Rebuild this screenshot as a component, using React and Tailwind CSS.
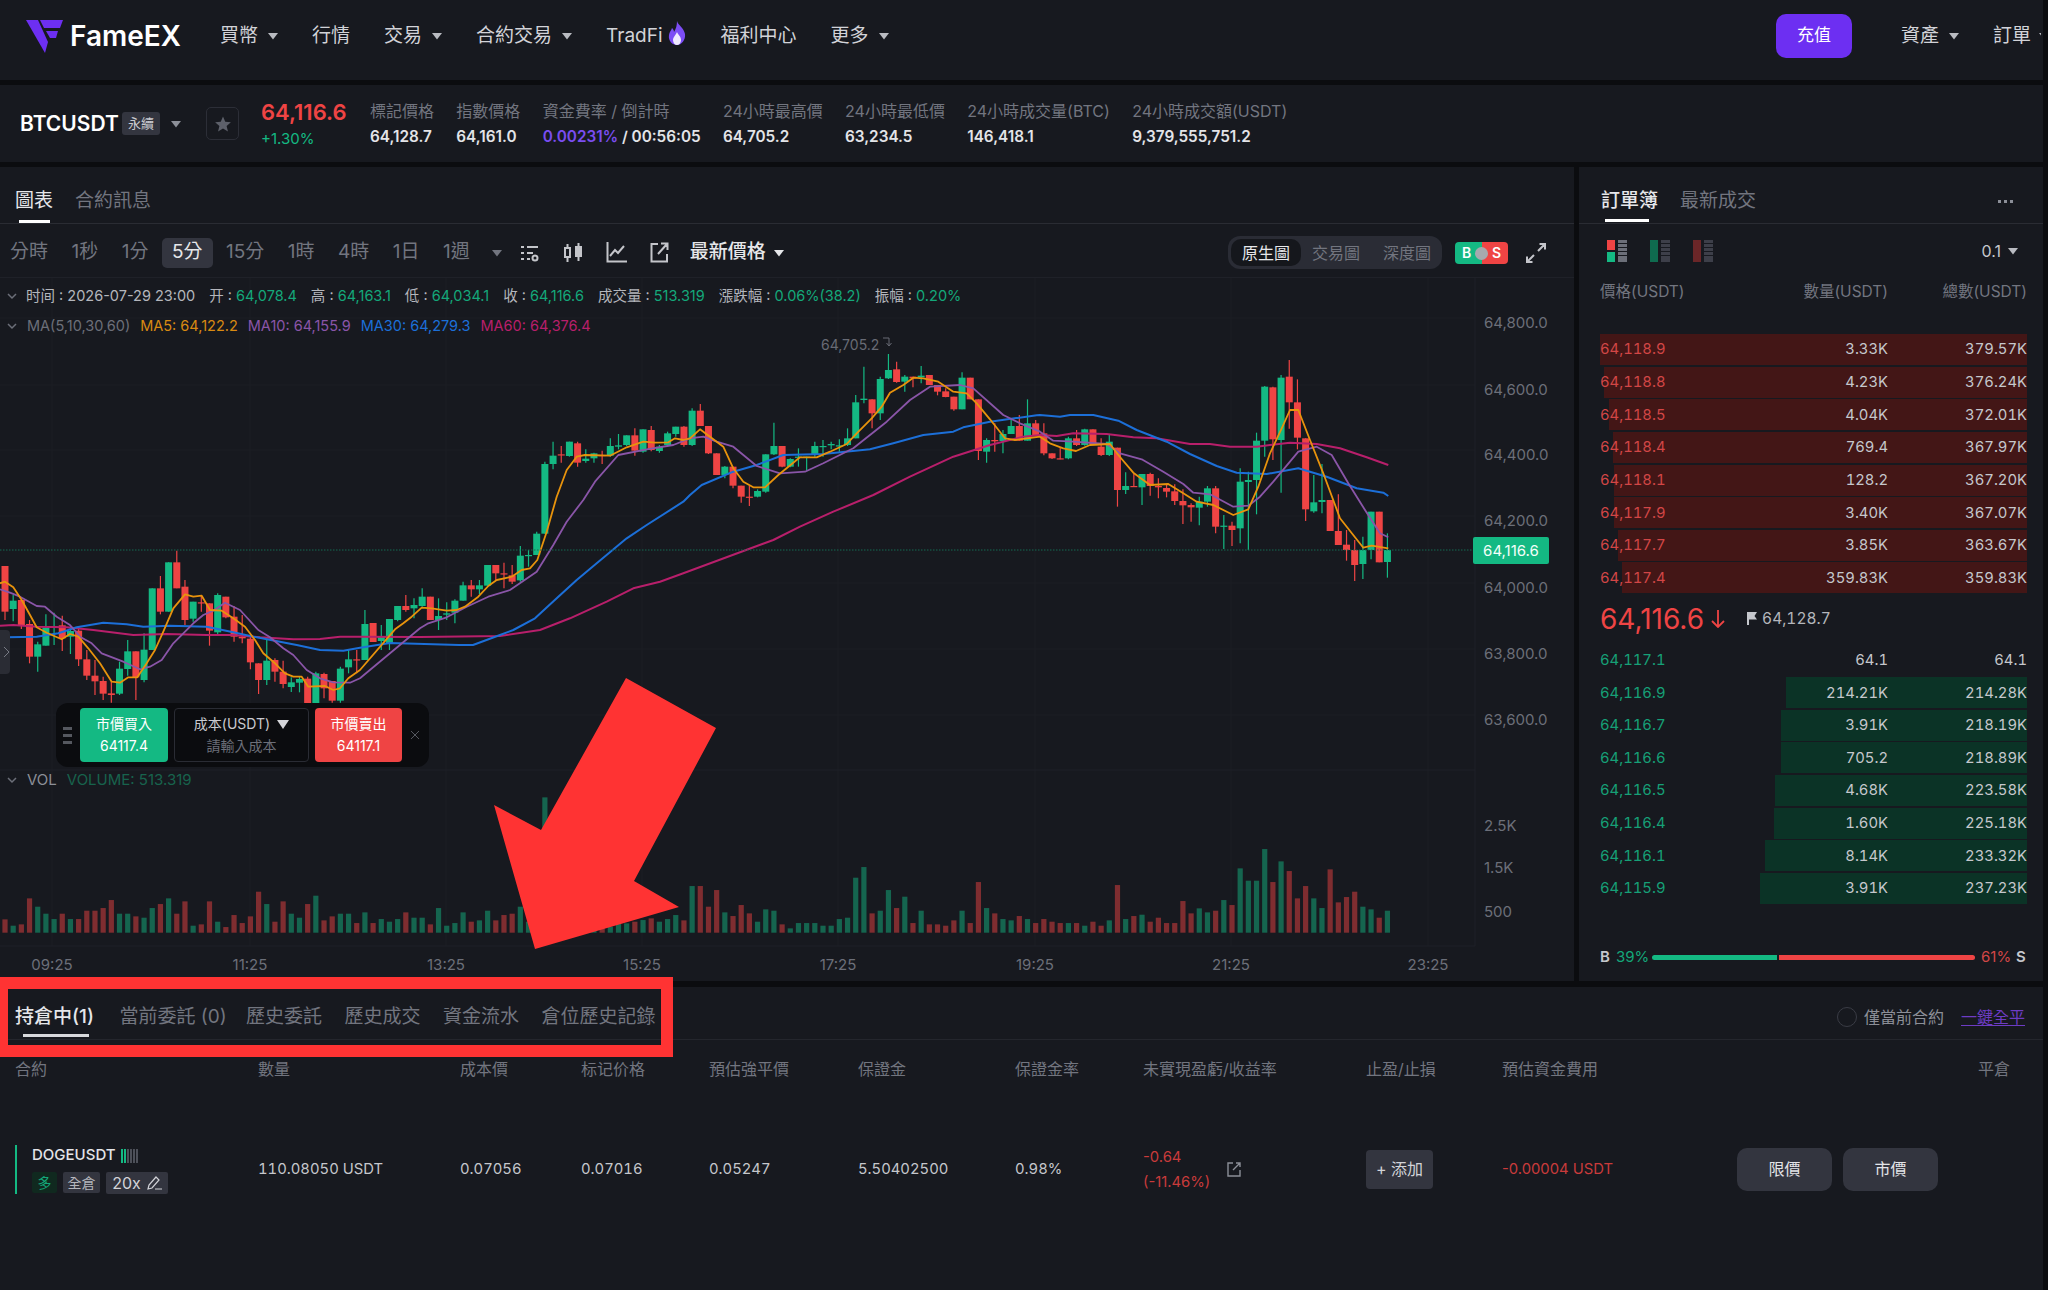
import React from 'react';

const r = 1;
const g = 0;

// candle reads: [colour, bodyTop, bodyBottom, wickTop, wickBottom], in 3x crop pixels of each region
const REGIONS = [
  { base: 480, rows: [
    [r,258,395,258,420],[g,362,387,345,424],[r,360,437,360,447],[r,432,530,420,550],[g,493,530,485,575],[g,443,497,403,497],[g,438,442,398,495],[r,436,475,407,513],[g,453,470,435,522],[r,452,538,440,558],
    [r,538,587,510,600],[r,587,604,540,645],[r,603,641,590,660],[r,640,645,605,668],[g,566,641,545,645],[g,514,567,480,587],[r,514,592,514,660],[g,509,600,460,607],[g,325,510,325,510],[r,325,395,288,403],
    [g,247,395,247,395],[r,247,325,212,325],[r,320,420,300,435],[g,365,416,365,425],[r,367,370,345,395],[r,370,452,370,497],[g,345,457,340,462],[r,350,412,350,415],[r,410,470,378,485],[r,470,475,405,490],
    [r,476,547,470,568],[r,550,600,550,642],[g,542,600,478,615],[r,540,575,535,605],[r,575,612,542,625],[g,607,621,592,636],[g,597,608,590,637],[r,596,670,590,670],[g,580,670,575,670],[r,582,625,578,655],
    [r,603,662,603,668],[g,566,662,560,668],[g,538,562,508,580],[r,538,541,510,580],
  ] },
  { base: 390, rows: [
    [g,702,810,660,810],[r,699,756,699,756],[g,741,753,705,780],[g,687,762,687,780],[g,648,690,648,694],[r,648,660,615,665],[g,645,655,625,685],[g,620,648,595,650],[r,620,690,620,690],[g,678,690,625,720],
    [g,670,674,637,690],[g,632,668,628,700],[g,586,632,575,632],[r,586,598,570,620],[g,586,598,570,612],[g,525,587,525,587],[r,525,550,525,570],[r,550,553,518,595],[r,556,575,525,582],[g,497,571,468,575],
    [g,495,497,480,530],[g,431,495,425,495],[g,222,431,215,431],[g,197,222,155,238],[r,193,196,168,218],[g,155,198,155,200],[r,160,218,155,230],[g,206,213,178,218],[g,190,205,188,218],[r,195,197,182,222],
    [g,168,197,145,200],[g,166,170,132,178],[g,136,165,136,168],[r,136,182,115,197],[g,118,185,118,188],[r,120,180,108,184],[g,170,183,165,188],[g,130,165,125,170],[g,110,132,110,140],[r,110,165,108,170],
    [g,62,165,55,168],
  ] },
  { base: 340, rows: [
    [r,212,258,192,258],[r,258,340,258,342],[r,340,405,340,405],[g,380,405,378,415],[r,380,437,380,445],[r,437,470,437,488],[r,470,472,438,498],[g,453,470,448,472],[g,343,455,343,458],[g,318,343,248,345],
    [r,318,380,318,382],[g,357,380,355,382],[g,350,352,325,380],[g,350,352,350,392],[g,318,342,305,350],[g,318,320,300,350],[g,312,316,305,328],[g,316,318,298,335],[g,295,315,265,318],[g,187,295,165,295],
    [g,176,180,80,190],[r,178,220,178,265],[g,117,220,110,240],[g,90,115,42,117],[r,88,126,65,128],[g,110,125,105,155],[r,110,115,110,142],[g,107,112,78,130],[r,105,135,105,135],[r,135,155,135,166],
    [r,154,171,145,172],[r,170,208,170,212],[g,113,208,97,208],[r,113,178,113,178],[r,178,333,178,360],[g,300,335,295,368],[r,300,304,250,335],[g,282,303,270,340],[g,258,282,235,282],[r,258,302,225,302],
    [g,250,302,178,302],[r,250,285,240,285],
  ] },
  { base: 350, rows: [
    [r,250,310,220,316],[r,310,325,310,327],[r,325,327,292,328],[g,265,325,260,328],[r,265,285,240,288],[g,238,285,236,287],[r,238,283,238,283],[r,290,315,265,318],[g,275,315,255,318],[r,293,420,293,470],
    [g,408,420,367,432],[r,408,411,372,411],[g,372,412,372,465],[r,372,408,368,437],[r,408,412,385,445],[r,414,425,405,442],[r,424,453,403,465],[r,453,466,418,522],[r,465,472,460,515],[g,455,473,440,526],
    [g,415,455,408,470],[r,415,530,408,550],[g,527,530,495,597],[r,527,540,515,588],[g,395,535,355,580],[g,390,396,365,600],[g,272,390,248,493],[g,110,272,108,320],[r,112,268,110,330],[g,83,270,75,428],
    [r,80,157,30,236],[r,157,263,88,298],[r,265,478,265,513],[g,457,484,375,488],[g,450,456,342,490],[r,450,543,450,543],[r,543,585,433,585],[r,584,600,540,632],[r,600,645,570,693],[g,600,642,560,687],
    [g,485,600,485,628],[r,485,637,485,637],[g,600,636,550,683],
  ] },
];

const CANDLES = REGIONS.flatMap(({ base, rows }) =>
  rows.map(([c, a, b, t, l]) => ({ c, top: base + a / 3, bot: base + b / 3, hi: base + t / 3, lo: base + l / 3 }))
);

const candleX = (i) => 5 + 8.18 * i;

// volume bar tops, 3x crop pixels, baseline 458
const VOL_TOPS = [
  418,437,433,355,380,401,417,401,417,417,392,392,384,360,401,401,409,413,384,372,355,401,364,437,433,364,425,441,405,429,
  409,335,372,425,364,401,413,372,347,421,409,401,401,429,397,429,417,425,417,397,413,413,433,384,437,429,397,425,421,392,
  421,405,401,380,425,400,52,420,430,410,425,430,420,430,440,430,430,425,420,415,425,417,405,421,318,318,380,330,
  397,408,375,400,425,388,392,433,445,429,429,429,437,437,417,413,293,261,400,392,330,384,350,429,392,433,433,437,421,392,
  429,306,384,400,417,421,408,417,429,417,425,429,429,429,437,425,437,421,315,417,408,404,425,413,429,429,363,400,385,397,
  392,360,375,265,302,302,207,306,244,273,355,318,355,384,268,367,351,335,380,388,413,392,
];

const line = (bx, by, pts) => pts.map(([x, y]) => `${(bx + x / 3).toFixed(1)},${(by + y / 3).toFixed(1)}`).join(' ');

const MA5 = [
  line(0, 480, [[0,310],[15,305],[40,322],[65,360],[90,405],[110,442],[140,458],[185,478],[210,462],[235,470],[265,505],[300,550],[335,605],[360,608],[385,592],[412,592],[440,550],[465,510],[490,455],[520,385],[555,343],[580,350],[605,347],[630,390],[665,392],[700,415],[735,440],[765,480],[790,520],[825,550],[855,580],[880,590],[905,590],[925,620],[975,618],[1000,630],[1020,625],[1045,595],[1080,570]]),
  line(340, 390, [[165,718],[190,700],[215,680],[245,653],[275,655],[320,662],[350,660],[375,650],[415,620],[445,588],[470,570],[515,560],[545,540],[570,535],[592,510],[620,425],[650,320],[680,240],[710,200],[735,195],[810,197],[860,172],[910,155],[945,158],[985,157],[1005,145],[1030,150]]),
  line(690, 340, [[0,295],[30,268],[60,290],[100,320],[130,385],[160,425],[190,442],[225,442],[265,405],[330,352],[380,352],[420,335],[470,312],[500,280],[545,235],[575,200],[600,158],[640,135],[670,113],[700,115],[745,125],[790,155],[830,160],[860,190],[900,238],[945,295],[975,300]]),
  line(1040, 350, [[0,260],[30,280],[70,295],[108,303],[150,285],[210,282],[235,315],[280,368],[330,405],[385,402],[430,430],[470,455],[520,465],[580,495],[625,478],[655,410],[690,310],[725,235],[750,180],[775,180],[810,270],[850,370],[900,505],[970,593],[995,587],[1045,595]]),
].join(' ');

const MA10 = [
  line(0, 480, [[0,328],[30,338],[60,350],[110,378],[135,380],[170,410],[210,435],[240,470],[275,490],[305,520],[370,545],[420,568],[450,560],[485,540],[520,490],[580,430],[610,405],[640,392],[675,368],[720,390],[775,450],[810,472],[850,505],[880,525],[920,570],[960,595],[1000,607],[1050,608],[1080,595]]),
  line(340, 390, [[240,715],[265,700],[320,682],[380,650],[445,620],[510,600],[590,545],[640,465],[680,395],[730,330],[765,275],[835,195],[920,178],[1000,165]]),
  line(690, 340, [[0,295],[40,290],[80,305],[130,320],[200,378],[270,400],[345,395],[400,370],[490,325],[590,245],[660,180],[720,140],[810,135],[850,145],[940,225],[990,250]]),
  line(1040, 350, [[0,245],[40,272],[100,275],[200,282],[240,310],[305,328],[370,365],[430,402],[460,428],[510,433],[580,470],[625,467],[660,440],[700,395],[775,305],[830,290],[875,315],[925,400],[975,480],[1020,550],[1045,562]]),
].join(' ');

const MA30 = [
  line(0, 480, [[20,472],[110,470],[175,460],[230,442],[310,428],[380,433],[430,440],[510,437],[620,440],[700,457],[770,472],[890,495],[960,510],[1030,512],[1080,503]]),
  '390,643 459,645 473,645 500,635',
  line(340, 390, [[520,720],[585,685],[650,625],[710,570],[770,520],[860,445],[920,405],[1030,335]]),
  line(690, 340, [[0,465],[35,435],[130,395],[200,375],[280,345],[400,342],[540,328],[610,310],[700,285],[790,275],[820,262],[900,245],[1040,226]]),
  line(1040, 350, [[0,195],[60,200],[90,195],[160,195],[235,212],[290,240],[380,275],[450,312],[530,348],[590,368],[680,372],[775,355],[860,380],[950,415],[1030,428],[1045,438]]),
].join(' ');

const MA60 = [
  line(0, 480, [[0,437],[40,435],[110,440],[200,442],[280,450],[400,465],[500,462],[620,465],[700,465],[780,472],[880,478],[960,477],[1020,470],[1080,470]]),
  '420,637 500,636',
  line(340, 390, [[600,720],[690,685],[800,635],[880,595],[960,575],[1030,550]]),
  line(690, 340, [[250,600],[330,560],[430,515],[550,465],[660,410],[790,350],[900,315],[1000,290]]),
  line(1040, 350, [[0,255],[50,258],[100,250],[200,252],[280,262],[350,265],[450,282],[510,282],[570,290],[650,290],[750,278],[830,282],[900,295],[980,322],[1045,345]]),
].join(' ');

const NAV = [
  { label: '買幣', caret: true },
  { label: '行情' },
  { label: '交易', caret: true },
  { label: '合約交易', caret: true },
  { label: 'TradFi', flame: true },
  { label: '福利中心' },
  { label: '更多', caret: true },
];

const STATS = [
  ['標記價格', '64,128.7'],
  ['指數價格', '64,161.0'],
  ['資金費率 / 倒計時', null],
  ['24小時最高價', '64,705.2'],
  ['24小時最低價', '63,234.5'],
  ['24小時成交量(BTC)', '146,418.1'],
  ['24小時成交額(USDT)', '9,379,555,751.2'],
];

const INTERVALS = ['分時', '1秒', '1分', '5分', '15分', '1時', '4時', '1日', '1週'];

const PRICE_TICKS = [['64,800.0', 323], ['64,600.0', 390], ['64,400.0', 455], ['64,200.0', 521], ['64,000.0', 588], ['63,800.0', 654], ['63,600.0', 720]];
const VOL_TICKS = [['2.5K', 826], ['1.5K', 868], ['500', 912]];
const TIME_TICKS = [['09:25', 52], ['11:25', 250], ['13:25', 446], ['15:25', 642], ['17:25', 838], ['19:25', 1035], ['21:25', 1231], ['23:25', 1428]];

const ASKS = [
  ['64,118.9', '3.33K', '379.57K', 0],
  ['64,118.8', '4.23K', '376.24K', 4],
  ['64,118.5', '4.04K', '372.01K', 9],
  ['64,118.4', '769.4', '367.97K', 13],
  ['64,118.1', '128.2', '367.20K', 14],
  ['64,117.9', '3.40K', '367.07K', 14],
  ['64,117.7', '3.85K', '363.67K', 18],
  ['64,117.4', '359.83K', '359.83K', 22],
];

const BIDS = [
  ['64,117.1', '64.1', '64.1', 0],
  ['64,116.9', '214.21K', '214.28K', 241],
  ['64,116.7', '3.91K', '218.19K', 246],
  ['64,116.6', '705.2', '218.89K', 246],
  ['64,116.5', '4.68K', '223.58K', 252],
  ['64,116.4', '1.60K', '225.18K', 253],
  ['64,116.1', '8.14K', '233.32K', 262],
  ['64,115.9', '3.91K', '237.23K', 267],
];

const TABLE_HEAD = ['合約', '數量', '成本價', '标记价格', '預估強平價', '保證金', '保證金率', '未實現盈虧/收益率', '止盈/止損', '預估資金費用'];

function Caret({ className = 'text-[#b9bbc1]' }) {
  return (
    <svg width="10" height="8" viewBox="0 0 10 8" className={className}>
      <polygon points="0,1 10,1 5,7.5" fill="currentColor" />
    </svg>
  );
}

function Logo() {
  return (
    <svg width="38" height="33" viewBox="0 0 38 33">
      <polygon points="0,0 12,0 22,22 19,33" fill="#6d2ff2" />
      <polygon points="14,0 37,0 34,8 18,8" fill="#6d2ff2" />
      <polygon points="20,11 32,11 30,18 24,18" fill="#6d2ff2" />
    </svg>
  );
}

function Flame() {
  return (
    <svg width="20" height="24" viewBox="0 0 20 24">
      <path d="M10 0c1 4 7 7 8 13 .8 6-3.500 11-8 11S1 20 2 14c.4-3 2-4 3-7 1 1 2 2 2 4 2-3 3-7 3-11z" fill="#7c4df5" />
      <path d="M10 11c1 3 4 4 4 8 0 3-2 5-4 5s-4-2-4-5c0-3 3-5 4-8z" fill="#efeaff" />
    </svg>
  );
}

function BookIcon({ mode }) {
  return (
    <svg width="22" height="22" viewBox="0 0 22 22">
      {mode === 'both' && <rect x="0" y="0" width="8" height="10" fill="#ef4444" />}
      {mode === 'both' && <rect x="0" y="12" width="8" height="10" fill="#14b983" />}
      {mode === 'buy' && <rect x="0" y="0" width="8" height="22" fill="#0f6b4f" />}
      {mode === 'sell' && <rect x="0" y="0" width="8" height="22" fill="#6b2628" />}
      {[0, 4, 8, 12, 16, 19].map((y) => (
        <rect key={y} x="11" y={y} width="9" height="3" fill={mode === 'both' ? '#6c6f79' : '#3d3f49'} />
      ))}
    </svg>
  );
}

function Header() {
  return (
    <header className="h-[80px] shrink-0 mb-[5px] bg-[#17191f] flex items-center pl-[26px] pb-[8px]">
      <Logo />
      <span className="ml-[6px] w-[113px] text-[28px] leading-none font-semibold text-white">FameEX</span>
      <nav className="ml-[37px] flex items-center gap-[34px]">
        {NAV.map((item) => (
          <div key={item.label} className="flex items-center gap-[10px] text-[19px] text-[#d2d3d8]">
            <span>{item.label}</span>
            {item.caret && <Caret />}
            {item.flame && <span className="-ml-[6px] -mt-[6px]"><Flame /></span>}
          </div>
        ))}
      </nav>
      <div className="ml-auto mr-[2px] flex items-center">
        <button className="w-[76px] h-[44px] rounded-[10px] bg-[#6d2ff2] text-[17px] text-white">充值</button>
        <div className="ml-[49px] flex items-center gap-[10px] text-[19px] text-[#d2d3d8]">
          <span>資產</span>
          <Caret />
        </div>
        <div className="ml-[34px] w-[48px] overflow-hidden flex items-center gap-[8px] text-[19px] text-[#d2d3d8]">
          <span className="shrink-0">訂單</span>
          <span className="shrink-0"><Caret /></span>
        </div>
      </div>
    </header>
  );
}

function Ticker() {
  return (
    <section className="h-[77px] shrink-0 mb-[5px] bg-[#17191f] flex items-center pl-[20px]">
      <span className="w-[96px] text-[21px] font-semibold text-white">BTCUSDT</span>
      <span className="ml-[6px] w-[38px] h-[23px] rounded-[3px] bg-[#33353f] flex items-center justify-center text-[13px] text-[#c9cad0]">永續</span>
      <span className="ml-[11px]"><Caret className="text-[#8c8f98]" /></span>
      <button className="ml-[25px] w-[33px] h-[33px] rounded-[5px] border border-[#2c2e37] flex items-center justify-center">
        <svg width="18" height="18" viewBox="0 0 24 24"><path d="M12 2l3 7 7.500.6-5.700 4.900 1.800 7.500L12 18l-6.600 4 1.800-7.500L1.500 9.600 9 9z" fill="#5d606a" /></svg>
      </button>
      <div className="ml-[22px] w-[87px] flex flex-col gap-[4px]">
        <span className="text-[22px] leading-[27px] font-semibold text-[#ef4444]">64,116.6</span>
        <span className="text-[15px] leading-[18px] text-[#14b983]">+1.30%</span>
      </div>
      <div className="ml-[22px] flex items-center gap-[22.300px]">
        {STATS.map(([label, value]) => (
          <div key={label} className="flex flex-col gap-[6px]">
            <span className="text-[16px] leading-[20px] text-[#72757f] whitespace-nowrap">{label}</span>
            {value ? (
              <span className="text-[15.300px] leading-[19px] font-semibold text-[#e3e4e8]">{value}</span>
            ) : (
              <span className="text-[15.300px] leading-[19px] font-semibold text-[#e3e4e8]"><span className="text-[#7a4df0]">0.00231%</span> / 00:56:05</span>
            )}
          </div>
        ))}
      </div>
    </section>
  );
}

function CandleChart() {
  return (
    <svg viewBox="0 278 1574 703" className="absolute inset-0 w-full h-full">
      {TIME_TICKS.map(([, x]) => <line key={x} x1={x} x2={x} y1="278" y2="946" stroke="#1c1e25" />)}
      {PRICE_TICKS.map(([, y]) => <line key={y} x1="0" x2="1475" y1={y - 5} y2={y - 5} stroke="#1c1e25" />)}
      <line x1="0" x2="1475" y1="770" y2="770" stroke="#1f2128" />
      <line x1="0" x2="1475" y1="946" y2="946" stroke="#1f2128" />
      <line x1="1475" x2="1475" y1="278" y2="946" stroke="#1f2128" />
      {CANDLES.map((k, i) => {
        const color = k.c ? '#ef4444' : '#14b983';
        const x = candleX(i);
        return (
          <g key={i}>
            <line x1={x} x2={x} y1={k.hi} y2={k.lo} stroke={color} strokeWidth="1.200" />
            <rect x={x - 3.500} y={k.top} width="7" height={Math.max(k.bot - k.top, 1.200)} fill={color} />
          </g>
        );
      })}
      <polyline points={MA60} fill="none" stroke="#b81f6b" strokeWidth="2" strokeLinejoin="round" />
      <polyline points={MA30} fill="none" stroke="#1c6fd8" strokeWidth="2" strokeLinejoin="round" />
      <polyline points={MA10} fill="none" stroke="#8a55a8" strokeWidth="1.800" strokeLinejoin="round" />
      <polyline points={MA5} fill="none" stroke="#e8930c" strokeWidth="1.800" strokeLinejoin="round" />
      <line x1="0" x2="1475" y1="550" y2="550" stroke="#146b52" strokeDasharray="1.500 1.500" />
      {VOL_TOPS.map((top, i) => (
        <rect key={i} x={candleX(i) - 2.600} y={932.7 - (458 - top) / 3} width="5.200" height={(458 - top) / 3} fill={CANDLES[i].c ? '#7f2d30' : '#15654f'} />
      ))}
      <text x="821" y="350" fontSize="14" fill="#686b75">64,705.2</text>
      <path d="M883 338h6v7m-2.500-2l2.500 3 2.500-3" fill="none" stroke="#686b75" />
      {PRICE_TICKS.map(([t, y]) => <text key={t} x="1484" y={y + 5} fontSize="15" fill="#6c6f79">{t}</text>)}
      {VOL_TICKS.map(([t, y]) => <text key={t} x="1484" y={y + 5} fontSize="15" fill="#6c6f79">{t}</text>)}
      {TIME_TICKS.map(([t, x]) => <text key={t} x={x} y="970" fontSize="15" textAnchor="middle" fill="#6c6f79">{t}</text>)}
      <rect x="1473" y="537" width="76" height="27" rx="2" fill="#14b983" />
      <text x="1511" y="556" fontSize="15" textAnchor="middle" fill="#f2fff9">64,116.6</text>
    </svg>
  );
}

function Chevron() {
  return (
    <svg width="10" height="8" viewBox="0 0 10 8"><path d="M1 2l4 4 4-4" fill="none" stroke="#6c6f79" strokeWidth="1.500" /></svg>
  );
}

function QuickTrade() {
  return (
    <div className="absolute left-[56px] top-[425px] w-[373px] h-[64px] rounded-[12px] bg-[#0b0c0f] flex items-center pl-[7px]">
      <div className="w-[9px] flex flex-col gap-[4px]">
        <span className="h-[3px] bg-[#55585f]" />
        <span className="h-[3px] bg-[#55585f]" />
        <span className="h-[3px] bg-[#55585f]" />
      </div>
      <button className="ml-[8px] w-[88px] h-[54px] rounded-[4px] bg-[#14b983] text-white text-[14px] leading-[22px] flex flex-col items-center justify-center">
        <span>市價買入</span>
        <span>64117.4</span>
      </button>
      <div className="ml-[6px] w-[135px] h-[54px] rounded-[4px] border border-[#2a2c34] flex flex-col items-center justify-center text-[14px] leading-[22px]">
        <span className="flex items-center gap-[7px] text-[#c9cad0]">成本(USDT)<svg width="12" height="10" viewBox="0 0 12 10"><polygon points="0,1 12,1 6,10" fill="#d5d6da" /></svg></span>
        <span className="text-[#6c6f79]">請輸入成本</span>
      </div>
      <button className="ml-[6px] w-[87px] h-[54px] rounded-[4px] bg-[#ef4444] text-white text-[14px] leading-[22px] flex flex-col items-center justify-center">
        <span>市價賣出</span>
        <span>64117.1</span>
      </button>
      <svg className="ml-[8px]" width="10" height="10" viewBox="0 0 10 10"><path d="M1 1l8 8M9 1l-8 8" stroke="#55585f" /></svg>
    </div>
  );
}

function ChartPanel() {
  return (
    <div className="w-[1574px] shrink-0 bg-[#17191f] flex flex-col">
      <div className="h-[57px] shrink-0 border-b border-[#2a2c33] flex items-center pl-[15px] gap-[22px] text-[19px] pt-[13px]">
        <span className="relative text-[#e6e7ea]">圖表<span className="absolute left-[4px] right-[3px] -bottom-[7px] h-[3px] bg-white" /></span>
        <span className="text-[#72757f]">合約訊息</span>
      </div>
      <div className="h-[54px] shrink-0 border-b border-[#1f2128] flex items-center pl-[10px] pr-[28px] pt-[4px] text-[#72757f]">
        <div className="flex items-center gap-[23.500px] text-[19px]">
          {INTERVALS.map((t) => (
            t === '5分'
              ? <span key={t} className="-mx-[10px] px-[10px] h-[30px] rounded-[5px] bg-[#33353f] text-[#e6e7ea] flex items-center">{t}</span>
              : <span key={t}>{t}</span>
          ))}
        </div>
        <span className="ml-[22px]"><Caret className="text-[#72757f]" /></span>
        <svg className="ml-[18px]" width="20" height="20" viewBox="0 0 20 20" fill="none" stroke="#c4c5ca" strokeWidth="2">
          <path d="M1 4h3M7 4h11M1 10h3M7 10h6M1 16h3M7 16h3" />
          <circle cx="15" cy="15" r="2.500" />
        </svg>
        <svg className="ml-[23px]" width="20" height="22" viewBox="0 0 20 22" fill="none" stroke="#c4c5ca" strokeWidth="2">
          <rect x="2" y="6" width="5" height="9" />
          <rect x="13" y="5" width="5" height="9" fill="#c4c5ca" />
          <path d="M4.500 2v4M4.500 15v5M15.500 1v4M15.500 14v5" />
        </svg>
        <svg className="ml-[23px]" width="21" height="21" viewBox="0 0 21 21" fill="none" stroke="#c4c5ca" strokeWidth="2">
          <path d="M1.500 0v19.500H21M4 14l5-6 3 3 6-7" />
        </svg>
        <svg className="ml-[23px]" width="19" height="21" viewBox="0 0 19 21" fill="none" stroke="#c4c5ca" strokeWidth="2">
          <path d="M8 2H1.500v17.500H17V12M8 12L17 2M11 1.500h6.500V8" />
        </svg>
        <span className="ml-[21px] text-[19px] font-medium text-[#e6e7ea]">最新價格</span>
        <span className="ml-[8px]"><Caret className="text-[#e6e7ea]" /></span>
        <div className="ml-auto w-[214px] h-[33px] rounded-[12px] bg-[#2a2c35] flex items-center pl-[3px] text-[16px]">
          <span className="w-[70px] h-[27px] rounded-[10px] bg-[#15171c] text-[#e6e7ea] flex items-center justify-center">原生圖</span>
          <span className="ml-[11px]">交易圖</span>
          <span className="ml-[23px]">深度圖</span>
        </div>
        <div className="ml-[13px] relative w-[53px] h-[22px] rounded-[4px] overflow-hidden flex text-[14px] font-semibold text-white">
          <span className="w-1/2 bg-[#14b983] pl-[7px] leading-[22px]">B</span>
          <span className="w-1/2 bg-[#ef4444] pr-[7px] text-right leading-[22px]">S</span>
          <span className="absolute left-[20px] top-[5px] w-[13px] h-[13px] rounded-full bg-[#a7a9ae]" />
        </div>
        <svg className="ml-[18px]" width="20" height="20" viewBox="0 0 20 20" fill="none" stroke="#c4c5ca" strokeWidth="2">
          <path d="M12 8l7-7M13.500 1H19v5.500M8 12l-7 7M6.500 19H1v-5.500" />
        </svg>
      </div>
      <div className="relative flex-1">
        <CandleChart />
        <div className="absolute left-[7px] top-[9px] h-[18px] flex items-center gap-[14px] text-[14.500px] leading-[18px] text-[#b4b6bc] whitespace-nowrap">
          <Chevron />
          <span className="-ml-[5px]">时间 : 2026-07-29 23:00</span>
          <span>开 : <span className="text-[#14a87a]">64,078.4</span></span>
          <span>高 : <span className="text-[#14a87a]">64,163.1</span></span>
          <span>低 : <span className="text-[#14a87a]">64,034.1</span></span>
          <span>收 : <span className="text-[#14a87a]">64,116.6</span></span>
          <span>成交量 : <span className="text-[#14a87a]">513.319</span></span>
          <span>漲跌幅 : <span className="text-[#14a87a]">0.06%(38.2)</span></span>
          <span>振幅 : <span className="text-[#14a87a]">0.20%</span></span>
        </div>
        <div className="absolute left-[7px] top-[39px] h-[18px] flex items-center gap-[10px] text-[14.500px] leading-[18px] whitespace-nowrap">
          <Chevron />
          <span className="text-[#6c6f79]">MA(5,10,30,60)</span>
          <span className="text-[#d98a12]">MA5: 64,122.2</span>
          <span className="text-[#8a55a8]">MA10: 64,155.9</span>
          <span className="text-[#1c6fd8]">MA30: 64,279.3</span>
          <span className="text-[#b81f6b]">MA60: 64,376.4</span>
        </div>
        <div className="absolute left-[7px] top-[493px] h-[18px] flex items-center gap-[10px] text-[15px] leading-[18px] whitespace-nowrap">
          <Chevron />
          <span className="text-[#8c8f98]">VOL</span>
          <span className="text-[#17634d]">VOLUME: 513.319</span>
        </div>
        <div className="absolute left-0 top-[352px] w-[10px] h-[44px] rounded-r-[4px] bg-[#2a2c34] flex items-center justify-end overflow-hidden">
          <svg width="6" height="12" viewBox="0 0 6 12"><path d="M0 1l5 5-5 5" fill="none" stroke="#787b85" /></svg>
        </div>
        <QuickTrade />
      </div>
    </div>
  );
}

function BookRow({ row, side }) {
  const [price, qty, total, bar] = row;
  return (
    <div className="relative h-[31px] grid grid-cols-[148px_140px_139px] items-center text-[14.800px] tabular-nums text-[#c5c7cc]">
      {side === 'ask' ? (
        <span className="absolute right-0 top-0 bottom-0 bg-[#431616]" style={{ left: bar }} />
      ) : (
        <span className="absolute right-0 top-0 bottom-0 bg-[#0b3326]" style={{ width: bar }} />
      )}
      <span className={side === 'ask' ? 'relative text-[#d24646]' : 'relative text-[#16a077]'}>{price}</span>
      <span className="relative text-right">{qty}</span>
      <span className="relative text-right">{total}</span>
    </div>
  );
}

function OrderBook() {
  return (
    <div className="ml-[5px] flex-1 bg-[#17191f] pl-[21px] pr-[16px] flex flex-col">
      <div className="-ml-[21px] -mr-[16px] pl-[22px] pr-[30px] h-[57px] shrink-0 border-b border-[#2a2c33] flex items-center gap-[22px] text-[19px] pt-[12px]">
        <span className="relative font-medium text-[#e6e7ea]">訂單簿<span className="absolute left-[4px] right-[9px] -bottom-[7px] h-[3px] bg-white" /></span>
        <span className="text-[#72757f]">最新成交</span>
        <span className="ml-auto flex gap-[3px]">
          <span className="w-[3px] h-[3px] bg-[#8c8f98]" />
          <span className="w-[3px] h-[3px] bg-[#8c8f98]" />
          <span className="w-[3px] h-[3px] bg-[#8c8f98]" />
        </span>
      </div>
      <div className="h-[53px] shrink-0 flex items-center pl-[7px] pr-[9px] gap-[21px]">
        <BookIcon mode="both" />
        <BookIcon mode="buy" />
        <BookIcon mode="sell" />
        <span className="ml-auto flex items-center gap-[7px] text-[16px] text-[#c5c7cc]">0.1 <Caret /></span>
      </div>
      <div className="h-[30px] shrink-0 grid grid-cols-[148px_140px_139px] items-center text-[15.500px] text-[#72757f]">
        <span>價格(USDT)</span>
        <span className="text-right">數量(USDT)</span>
        <span className="text-right">總數(USDT)</span>
      </div>
      <div className="mt-[27px] flex flex-col gap-[1.650px]">
        {ASKS.map((row) => <BookRow key={row[0]} row={row} side="ask" />)}
      </div>
      <div className="h-[51px] shrink-0 flex items-center">
        <span className="text-[28px] leading-none text-[#ef4444]">64,116.6</span>
        <svg className="ml-[7px]" width="14" height="18" viewBox="0 0 14 18" fill="none" stroke="#ef4444" strokeWidth="1.800"><path d="M7 0v17M1 11l6 6 6-6" /></svg>
        <svg className="ml-[22px]" width="10" height="13" viewBox="0 0 10 13"><path d="M0 0h10L7.500 4 10 7.500H2V13H0z" fill="#c5c7cc" /></svg>
        <span className="ml-[5px] text-[15.500px] text-[#b4b6bc] tabular-nums">64,128.7</span>
      </div>
      <div className="flex flex-col gap-[1.650px]">
        {BIDS.map((row) => <BookRow key={row[0]} row={row} side="bid" />)}
      </div>
      <div className="mt-[42px] flex items-center text-[15px]">
        <span className="w-[16px] font-semibold text-[#c5c7cc]">B</span>
        <span className="w-[36px] text-[#14a87a]">39%</span>
        <div className="flex-1 flex gap-[2px]">
          <span className="w-[125px] h-[5px] rounded-l-full bg-[#14b983]" />
          <span className="flex-1 h-[5px] rounded-r-full bg-[#ef4444]" />
        </div>
        <span className="ml-[6px] w-[35px] text-[#d24646]">61%</span>
        <span className="w-[11px] font-semibold text-[#c5c7cc]">S</span>
      </div>
    </div>
  );
}

function Positions() {
  return (
    <section className="flex-1 bg-[#17191f]">
      <div className="h-[53px] border-b border-[#24262d] flex items-center pl-[15px] pr-[18px] pt-[8px]">
        <div className="flex items-center gap-[22.500px] text-[19px] text-[#72757f]">
          <span className="relative w-[82px] whitespace-nowrap font-medium text-[#e6e7ea]">持倉中(1)<span className="absolute left-[8px] right-[8px] -bottom-[6px] h-[3px] bg-[#d8d9dc]" /></span>
          <span className="w-[104px] whitespace-nowrap">當前委託 (0)</span>
          <span>歷史委託</span>
          <span>歷史成交</span>
          <span>資金流水</span>
          <span>倉位歷史記錄</span>
        </div>
        <span className="ml-auto w-[20px] h-[20px] rounded-full border border-[#3a3c45]" />
        <span className="ml-[7px] text-[16px] text-[#8c8f98]">僅當前合約</span>
        <span className="ml-[17px] text-[16px] text-[#6d3cc4] underline underline-offset-2">一鍵全平</span>
      </div>
      <div className="h-[58px] pl-[15px] pr-[33px] grid grid-cols-[243px_202px_121px_128px_149px_157px_128px_223px_136px_200px_1fr] items-center text-[16px] text-[#72757f]">
        {TABLE_HEAD.map((t) => <span key={t} className="whitespace-nowrap">{t}</span>)}
        <span className="text-right">平倉</span>
      </div>
      <div className="h-[142px] pl-[15px] pr-[33px] grid grid-cols-[243px_202px_121px_128px_149px_157px_128px_223px_136px_200px_1fr] items-center text-[14.800px] text-[#c5c7cc]">
        <div className="h-[49px] border-l-[2px] border-[#14b983] pl-[15px] flex flex-col justify-between">
          <div className="flex items-center gap-[5px] h-[22px]">
            <span className="text-[15px] font-medium text-[#e3e4e8]">DOGEUSDT</span>
            <svg width="17" height="14" viewBox="0 0 17 14">
              <rect x="0" width="2" height="14" fill="#14b983" />
              <rect x="3" width="2" height="14" fill="#14b983" />
              <rect x="6" width="2" height="14" fill="#4d5059" />
              <rect x="9" width="2" height="14" fill="#4d5059" />
              <rect x="12" width="2" height="14" fill="#4d5059" />
              <rect x="15" width="2" height="14" fill="#4d5059" />
            </svg>
          </div>
          <div className="flex items-center gap-[6px] text-[14px]">
            <span className="w-[25px] h-[21px] rounded-[2px] bg-[#10291f] text-[#14a87a] flex items-center justify-center">多</span>
            <span className="w-[37px] h-[21px] rounded-[2px] bg-[#33353f] text-[#b4b6bc] flex items-center justify-center">全倉</span>
            <span className="w-[62px] h-[22px] rounded-[2px] bg-[#33353f] text-[#d2d3d8] text-[16px] flex items-center justify-center gap-[6px]">
              20x
              <svg width="15" height="15" viewBox="0 0 15 15" fill="none" stroke="#d2d3d8" strokeWidth="1.200"><path d="M1 14l1-4 7-8 3 3-7 8zM8 14h7" /></svg>
            </span>
          </div>
        </div>
        <span className="tabular-nums">110.08050 USDT</span>
        <span className="tabular-nums">0.07056</span>
        <span className="tabular-nums">0.07016</span>
        <span className="tabular-nums">0.05247</span>
        <span className="tabular-nums">5.50402500</span>
        <span className="tabular-nums">0.98%</span>
        <div className="flex items-center">
          <div className="flex flex-col gap-[5px] text-[#c93b3b] leading-[20px]">
            <span>-0.64</span>
            <span>(-11.46%)</span>
          </div>
          <svg className="ml-[17px]" width="14" height="15" viewBox="0 0 14 15" fill="none" stroke="#8c8f98" strokeWidth="1.400"><path d="M6 1H1v13h12V8M6 8l7-7M9 1h4v4" /></svg>
        </div>
        <span className="w-[67px] h-[39px] rounded-[4px] bg-[#33353f] text-[#d2d3d8] text-[16px] flex items-center justify-center">+ 添加</span>
        <span className="text-[#c93b3b] whitespace-nowrap">-0.00004 USDT</span>
        <div className="flex justify-end gap-[11px] mr-[72px] text-[16px] text-[#e3e4e8]">
          <button className="w-[95px] h-[43px] shrink-0 rounded-[10px] bg-[#33353f]">限價</button>
          <button className="w-[95px] h-[43px] shrink-0 rounded-[10px] bg-[#33353f]">市價</button>
        </div>
      </div>
    </section>
  );
}

export default function App() {
  return (
    <div className="relative w-[2048px] h-[1290px] overflow-hidden bg-[#0b0c0f] font-['Inter','Noto_Sans_CJK_TC',sans-serif]">
      <div className="w-[2043px] h-full flex flex-col overflow-hidden">
        <Header />
        <Ticker />
        <div className="h-[814px] shrink-0 mb-[6px] flex">
          <ChartPanel />
          <OrderBook />
        </div>
        <Positions />
      </div>
      {/* annotation drawn over the screenshot */}
      <div className="absolute left-0 top-[977px] w-[673px] h-[80px] border-[12px] border-l-[8px] border-[#ff3333]" />
      <svg className="absolute left-0 top-0 w-[2048px] h-[1290px] pointer-events-none" viewBox="0 0 2048 1290">
        <polygon points="535,949 494,805 541,830 626,678 716,728 634,881 679,907" fill="#ff3333" />
      </svg>
    </div>
  );
}
